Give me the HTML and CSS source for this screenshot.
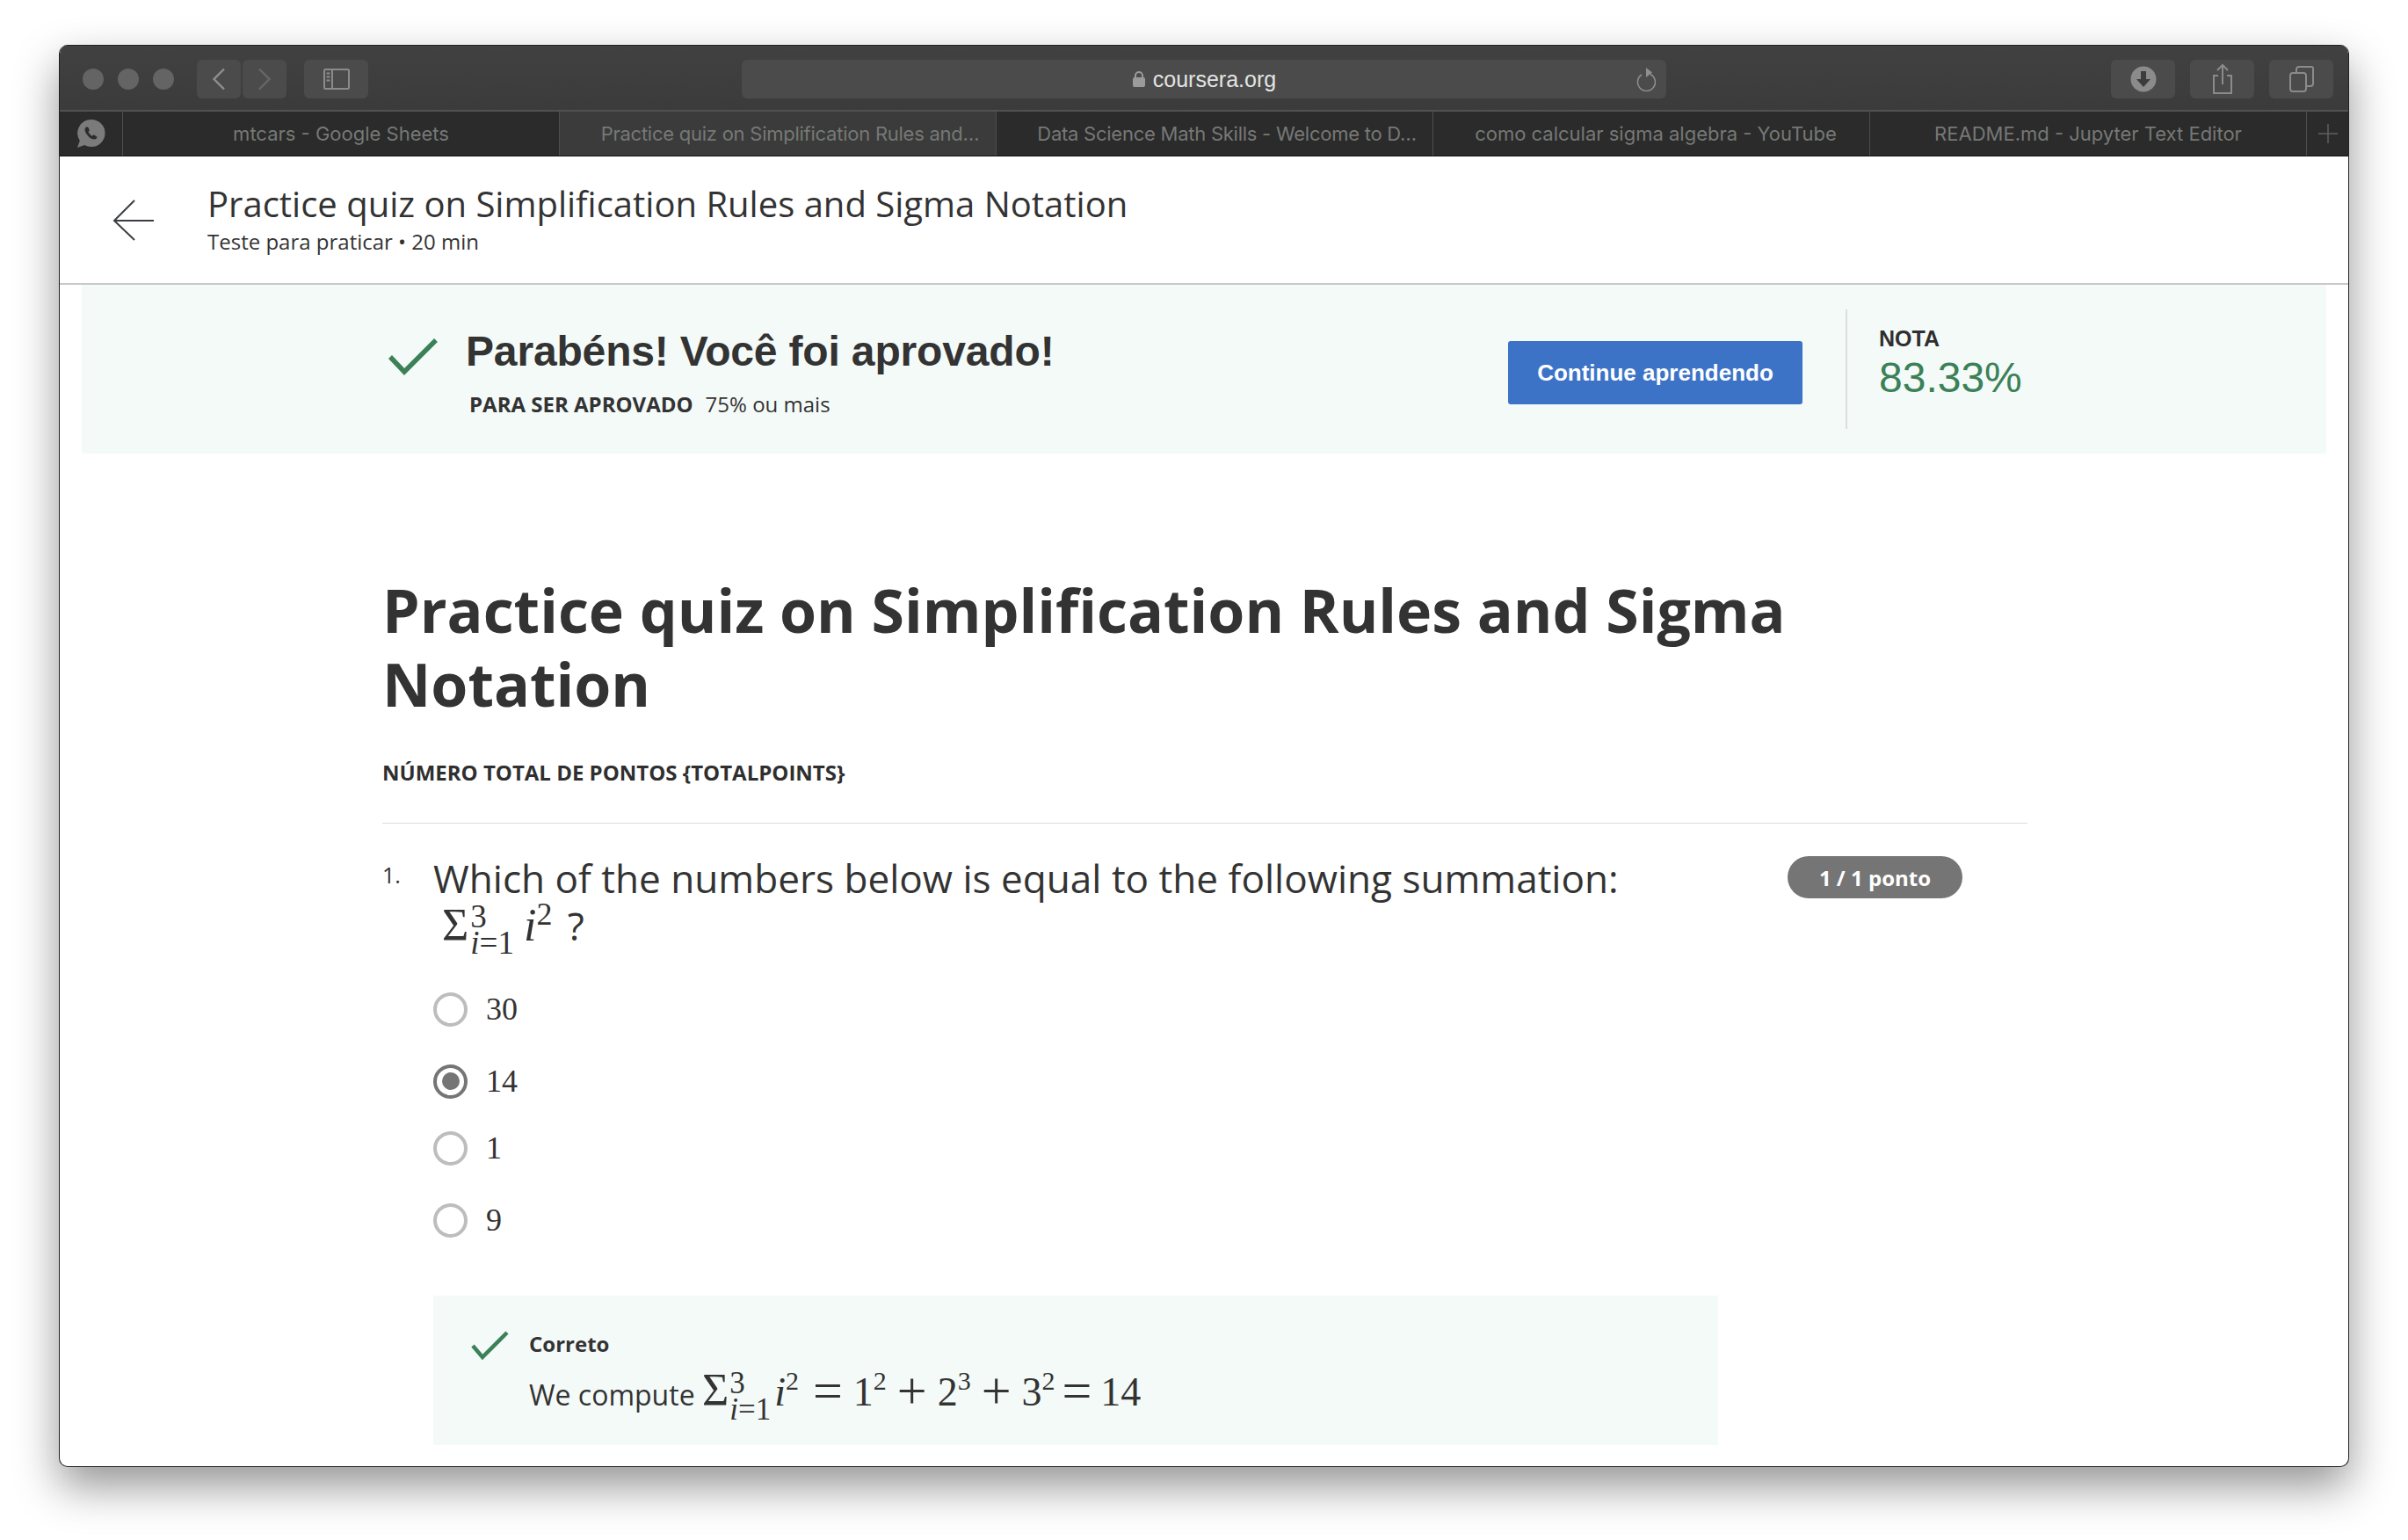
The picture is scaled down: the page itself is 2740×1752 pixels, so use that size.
FILE: index.html
```html
<!DOCTYPE html>
<html lang="en">
<head>
  <meta charset="UTF-8">
  <title>Practice quiz on Simplification Rules and Sigma Notation</title>
  <link rel="stylesheet" href="styles.css">
</head>
<body>
  <div class="window">
    <div class="toolbar">
      <div class="lights"><span></span><span></span><span></span></div>
      <div class="tool-btn nav-btn">
        <svg width="16" height="26" viewBox="0 0 16 26"><path d="M14 1.500 2.500 13 14 24.500" fill="none" stroke="#8e8f8e" stroke-width="2.400"/></svg>
      </div>
      <div class="tool-btn nav-btn nav-next">
        <svg width="16" height="26" viewBox="0 0 16 26"><path d="M2 1.500 13.500 13 2 24.500" fill="none" stroke="#666766" stroke-width="2.400"/></svg>
      </div>
      <div class="tool-btn side-btn">
        <svg width="30" height="24" viewBox="0 0 30 24"><rect x="1" y="1" width="28" height="22" rx="1.500" fill="none" stroke="#8a8b8a" stroke-width="2"/><path d="M10 1v22" stroke="#8a8b8a" stroke-width="2"/><path d="M3.500 5.500h4M3.500 9.500h4M3.500 13.500h4" stroke="#8a8b8a" stroke-width="2"/></svg>
      </div>
      <div class="url-bar">
        <svg class="lock" width="16" height="20" viewBox="0 0 16 20"><path d="M4 9V6a4 4 0 0 1 8 0v3" fill="none" stroke="#9a9b9a" stroke-width="2"/><rect x="1" y="8" width="14" height="11" rx="2" fill="#9a9b9a"/></svg>
        <span class="url-text">coursera.org</span>
        <svg class="reload" width="24" height="30" viewBox="0 0 24 30"><path d="M17 7.500A10 10 0 1 1 7 8" fill="none" stroke="#8e8f8e" stroke-width="1.500" transform="translate(1 3)"/><path d="M13 3 20 8.500 13 14z" fill="#8e8f8e"/></svg>
      </div>
      <div class="tool-btn right-btn first-right">
        <svg width="30" height="30" viewBox="0 0 30 30"><circle cx="15" cy="15" r="14.500" fill="#8a8b8a"/><path d="M12 6h6v9h5l-8 9-8-9h5z" fill="#3b3c3b"/></svg>
      </div>
      <div class="tool-btn right-btn">
        <svg width="24" height="36" viewBox="0 0 24 36"><path d="M7 14H2v20h20V14h-5" fill="none" stroke="#8a8b8a" stroke-width="2"/><path d="M12 24V2M6 8l6-6 6 6" fill="none" stroke="#8a8b8a" stroke-width="2"/></svg>
      </div>
      <div class="tool-btn right-btn">
        <svg width="28" height="30" viewBox="0 0 28 30"><rect x="1" y="8" width="18" height="21" rx="3" fill="none" stroke="#8a8b8a" stroke-width="2"/><path d="M8 8V4a3 3 0 0 1 3-3h14a2 2 0 0 1 2 2v17a3 3 0 0 1-3 3h-5" fill="none" stroke="#8a8b8a" stroke-width="2"/></svg>
      </div>
    </div>

    <div class="tabbar">
      <div class="pinned-tab">
        <svg width="34" height="34" viewBox="0 0 34 34"><path d="M17 1a15.500 15.500 0 0 1 0 31c-3 0-5.500-.8-7.800-2L1 33l2.800-8A15.500 15.500 0 0 1 17 1z" fill="#7a7b7a"/><path d="M11 9.500c-2 1.500-1.800 4.500.5 8 2.500 3.800 5.500 6 8.500 6 2 0 3.500-1.200 3.500-2.800l-3.800-2.500-2 1.500c-1.500-.7-3.500-3-4.200-4.700l1.500-2-2-3.500z" fill="#2b2c2b"/></svg>
      </div>
      <div class="tab">mtcars - Google Sheets</div>
      <div class="tab tab-active tab-cut">Practice quiz on Simplification Rules and…</div>
      <div class="tab tab-cut">Data Science Math Skills - Welcome to D…</div>
      <div class="tab tab-nudge">como calcular sigma algebra - YouTube</div>
      <div class="tab">README.md - Jupyter Text Editor</div>
      <div class="new-tab">
        <svg width="22" height="22" viewBox="0 0 22 22"><path d="M11 0v22M0 11h22" stroke="#5f605f" stroke-width="1.500"/></svg>
      </div>
    </div>

    <div class="page">
      <header class="page-header">
        <svg class="back-arrow" width="48" height="48" viewBox="0 0 48 48"><path d="M47 25H2M25 2 2 25l23 22" fill="none" stroke="#3a3d42" stroke-width="2"/></svg>
        <div class="header-text">
          <div class="header-title">Practice quiz on Simplification Rules and Sigma Notation</div>
          <div class="header-sub">Teste para praticar • 20 min</div>
        </div>
      </header>

      <section class="banner">
        <svg class="pass-check" width="56" height="42" viewBox="0 0 56 42"><path d="M2 21l16 17L54 2" fill="none" stroke="#3b8158" stroke-width="5.500"/></svg>
        <div class="pass-text">
          <h2 class="pass-title">Parabéns! Você foi aprovado!</h2>
          <p class="pass-note"><b>PARA SER APROVADO</b><span>75% ou mais</span></p>
        </div>
        <a class="continue-btn">Continue aprendendo</a>
        <div class="grade">
          <div class="grade-label">NOTA</div>
          <div class="grade-value">83.33%</div>
        </div>
      </section>

      <main class="quiz">
        <h1 class="quiz-title">Practice quiz on Simplification Rules and Sigma Notation</h1>
        <div class="total-points">NÚMERO TOTAL DE PONTOS {TOTALPOINTS}</div>

        <div class="question">
          <div class="question-num">1.</div>
          <div class="question-body">
            <div class="question-text">
              Which of the numbers below is equal to the following summation:<br>
              <span class="math math-q"><span class="sigma">Σ</span><span class="limits"><span>3</span><span><i>i</i>=1</span></span><span class="term"><i>i</i><sup>2</sup></span></span> ?
            </div>
            <div class="option option-first"><span class="radio"></span><span class="option-label">30</span></div>
            <div class="option option-wide"><span class="radio radio-on"></span><span class="option-label">14</span></div>
            <div class="option"><span class="radio"></span><span class="option-label">1</span></div>
            <div class="option option-wide"><span class="radio"></span><span class="option-label">9</span></div>

            <div class="feedback">
              <svg class="feedback-check" width="44" height="34" viewBox="0 0 44 34"><path d="M2 17l11 13L41 2" fill="none" stroke="#3b8158" stroke-width="4.500"/></svg>
              <div>
                <div class="feedback-label">Correto</div>
                <div class="feedback-text">We compute <span class="math math-f"><span class="sigma">Σ</span><span class="limits"><span>3</span><span><i>i</i>=1</span></span><span class="term"><i>i</i><sup>2</sup><span class="op op-first">=</span>1<sup>2</sup><span class="op">+</span>2<sup>3</sup><span class="op">+</span>3<sup>2</sup><span class="op op-last">=</span>14</span></span></div>
              </div>
            </div>
          </div>
          <div class="points-badge">1 / 1 ponto</div>
        </div>
      </main>
    </div>
  </div>
</body>
</html>
```

FILE: styles.css
```css
body {
  box-sizing: border-box;
  height: 1752px;
  margin: 0;
  padding: 51px 0 0 67px;
  background: #fff;
  font-family: "Open Sans", sans-serif;
  color: #2f2f2f;
}
.window {
  box-sizing: border-box;
  width: 2606px;
  height: 1618px;
  border: 1px solid #222;
  border-top: 0;
  border-radius: 10px;
  overflow: hidden;
  background: #fff;
  box-shadow: 0 22px 50px rgba(0, 0, 0, 0.42);
  display: flex;
  flex-direction: column;
}

/* browser chrome */
.toolbar {
  box-sizing: border-box;
  display: flex;
  align-items: center;
  height: 76px;
  padding: 2px 17px 0 26px;
  background: linear-gradient(#404140, #3a3b3a);
  border-top: 1px solid #222;
  border-bottom: 2px solid #505150;
}
.lights {
  display: flex;
  gap: 16px;
  margin-right: 26px;
}
.lights span {
  width: 24px;
  height: 24px;
  border-radius: 50%;
  background: #636463;
}
.tool-btn {
  display: flex;
  align-items: center;
  justify-content: center;
  height: 44px;
  border-radius: 6px;
  background: #4a4b4a;
}
.nav-btn {
  width: 50px;
}
.nav-next {
  margin-left: 2px;
}
.side-btn {
  width: 73px;
  margin-left: 20px;
}
.url-bar {
  display: flex;
  align-items: center;
  justify-content: center;
  position: relative;
  width: 1052px;
  height: 44px;
  margin-left: 425px;
  border-radius: 6px;
  background: #4a4b4a;
}
.lock {
  margin-right: 8px;
}
.url-text {
  padding-top: 2px;
  font-family: "Liberation Sans", sans-serif;
  font-size: 25px;
  color: #e4e4e4;
}
.reload {
  position: absolute;
  right: 12px;
  top: 6px;
}
.right-btn {
  width: 73px;
  margin-left: 17px;
}
.first-right {
  margin-left: 506px;
}

.tabbar {
  display: flex;
  height: 51px;
  background: #2a2b2a;
  border-bottom: 1px solid #111;
  box-sizing: border-box;
}
.pinned-tab {
  display: flex;
  align-items: center;
  justify-content: center;
  width: 71px;
  border-right: 1px solid #4d4e4d;
}
.tab {
  flex: 0 0 497px;
  box-sizing: border-box;
  display: flex;
  align-items: center;
  justify-content: center;
  border-right: 1px solid #4d4e4d;
  font-family: "Inter", sans-serif;
  font-size: 22px;
  color: #777877;
}
.tab-cut {
  padding-left: 28px;
  letter-spacing: -0.25px;
}
.tab-nudge {
  padding-left: 10px;
}
.tab-active {
  background: #3a3b3a;
}
.new-tab {
  flex: 1;
  display: flex;
  align-items: center;
  justify-content: center;
}

/* page */
.page-header {
  display: flex;
  align-items: center;
  height: 146px;
  padding-left: 60px;
  border-bottom: 2px solid #c8c8c8;
  box-sizing: border-box;
}
.back-arrow {
  margin-right: 60px;
}
.header-text {
  padding-bottom: 7px;
}
.header-title {
  font-size: 40px;
  line-height: 56px;
  color: #333;
}
.header-sub {
  font-size: 24px;
  line-height: 30px;
  color: #333;
}

.banner {
  display: flex;
  align-items: center;
  height: 192px;
  margin: 0 25px;
  padding-left: 349px;
  background: #f4faf8;
}
.pass-check {
  margin: -29px 32px 0 0;
}
.pass-text {
  padding-top: 5px;
}
.pass-title {
  margin: 0;
  font-family: "Liberation Sans", sans-serif;
  font-size: 48px;
  font-weight: bold;
  line-height: 60px;
  letter-spacing: -0.16px;
  color: #333;
}
.pass-note {
  margin: 14px 0 0 4px;
  font-size: 24px;
  line-height: 32px;
  color: #333;
}
.pass-note span {
  margin-left: 14px;
}
.continue-btn {
  display: flex;
  align-items: center;
  justify-content: center;
  width: 335px;
  height: 72px;
  margin: 8px 0 0 auto;
  border-radius: 3px;
  background: #3c73c7;
  font-family: "Liberation Sans", sans-serif;
  font-size: 26px;
  font-weight: bold;
  color: #fff;
}
.grade {
  box-sizing: border-box;
  width: 547px;
  height: 136px;
  margin-left: 49px;
  padding: 17px 0 0 36px;
  border-left: 2px solid #dcdfde;
}
.grade-label {
  font-family: "Liberation Sans", sans-serif;
  font-size: 25px;
  font-weight: bold;
  line-height: 32px;
  color: #2f2f2f;
}
.grade-value {
  margin-top: 3px;
  font-family: "Liberation Sans", sans-serif;
  font-size: 48px;
  line-height: 52px;
  color: #3b8158;
}

.quiz {
  padding: 136px 0 0 367px;
  width: 1872px;
}
.quiz-title {
  margin: 0;
  font-size: 68px;
  font-weight: bold;
  line-height: 84px;
  color: #333;
}
.total-points {
  margin-top: 43px;
  padding-bottom: 41px;
  border-bottom: 1px solid #ddd;
  font-size: 24px;
  font-weight: bold;
  line-height: 32px;
  color: #2f2f2f;
}
.question {
  display: flex;
  align-items: flex-start;
  padding-top: 35px;
}
.question-num {
  flex: 0 0 58px;
  margin-top: 3px;
  font-size: 25px;
  line-height: 40px;
  color: #333;
}
.question-body {
  width: 1462px;
}
.question-text {
  font-size: 44.1px;
  line-height: 54px;
  color: #333;
}
.points-badge {
  display: flex;
  align-items: center;
  justify-content: center;
  width: 199px;
  height: 48px;
  margin: 2px 0 0 79px;
  border-radius: 24px;
  background: #757575;
  font-size: 24px;
  font-weight: bold;
  color: #fff;
}

/* typeset math */
.math {
  font-family: "Liberation Serif", serif;
  white-space: nowrap;
}
.math sup {
  line-height: 0;
  vertical-align: baseline;
  position: relative;
}
.limits {
  display: inline-flex;
  flex-direction: column;
  vertical-align: middle;
}
.math-q {
  font-size: 52px;
  margin: 0 6px 0 10px;
}
.math-q .limits {
  font-size: 37px;
  line-height: 30px;
  margin: 0 11px 0 2px;
}
.math-q sup {
  font-size: 36px;
  top: -18px;
}
.math-f {
  font-size: 46px;
  color: #333;
}
.math-f .sigma {
  font-size: 52px;
}
.math-f .limits {
  font-size: 35px;
  line-height: 30px;
  margin: 0 4px 0 1px;
}
.math-f sup {
  font-size: 30px;
  top: -18px;
}
.op {
  display: inline-block;
  margin: 0 12px;
  font-size: 60px;
  line-height: 0;
  vertical-align: -3px;
}
.op-first {
  margin-left: 16px;
}
.op-last {
  margin: 0 10px 0 8px;
}

.option {
  display: flex;
  align-items: center;
  height: 40px;
  margin-top: 36px;
}
.option-first {
  margin-top: 40px;
}
.option-wide {
  margin-top: 42px;
}
.radio {
  box-sizing: border-box;
  display: flex;
  align-items: center;
  justify-content: center;
  width: 39px;
  height: 39px;
  margin-right: 21px;
  border: 4px solid #bdbdbd;
  border-radius: 50%;
  background: #fff;
}
.radio-on {
  border-color: #757575;
}
.radio-on::after {
  content: "";
  width: 20px;
  height: 20px;
  border-radius: 50%;
  background: #757575;
}
.option-label {
  font-family: "Liberation Serif", serif;
  font-size: 36px;
  color: #333;
}

.feedback {
  display: flex;
  box-sizing: border-box;
  height: 170px;
  margin-top: 66px;
  padding: 39px 0 0 43px;
  background: #f4faf8;
}
.feedback-check {
  margin: 1px 22px 0 0;
}
.feedback-label {
  font-size: 24px;
  font-weight: bold;
  line-height: 32px;
  color: #333;
}
.feedback-text {
  margin-top: 9px;
  font-size: 32px;
  line-height: 56px;
  color: #333;
}
```
